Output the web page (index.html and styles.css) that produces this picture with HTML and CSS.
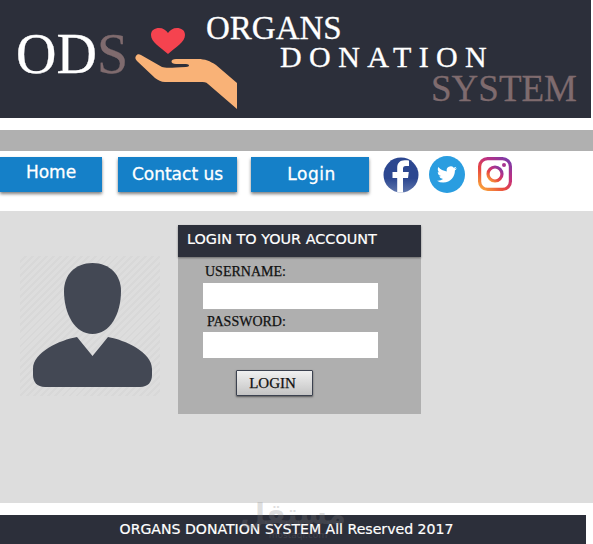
FILE: index.html
```html
<!DOCTYPE html>
<html lang="en">
<head>
    <meta charset="UTF-8">
    <meta name="viewport" content="width=device-width, initial-scale=1.0">
    <title>Organs Donation System</title>
    <link rel="stylesheet" href="styles.css">
</head>
<body>
    <header class="banner">
        <svg class="logo" width="591" height="118" viewBox="0 0 591 118">
            <text class="logo-text" x="16" y="73" font-size="56">OD<tspan class="logo-muted">S</tspan></text>
            <text class="logo-text" x="206" y="39" font-size="33">ORGANS</text>
            <text class="logo-text" x="280" y="67" font-size="30" letter-spacing="7.4">DONATION</text>
            <text class="logo-text logo-muted" x="431" y="101" font-size="37">SYSTEM</text>
            <path class="logo-heart" d="M168 54 C160 47 151 42 151 35 C151 30 155 28 159 28 C163 28 166 30 168 33 C170 30 173 28 177 28 C181 28 185 30 185 35 C185 42 176 47 168 54 Z"/>
            <path class="logo-hand" d="M136 56 C137 54 139 54 141 55 L162 67 C165 68 170 68 186 67 C190 67 190 64 186 64 L176 64 C170 64 170 59 176 59 L198 59 C205 59 210 61 216 65 L237 83 L237 109 L208 84 C206 82 204 82 200 82 L165 82 C161 82 158 80 155 78 L137 61 C135 59 135 57 136 56 Z"/>
        </svg>
    </header>

    <div class="band"></div>

    <nav class="nav">
        <a class="nav-btn nav-home" href="#">Home</a>
        <a class="nav-btn nav-contact" href="#">Contact us</a>
        <a class="nav-btn nav-login" href="#">Login</a>
        <div class="social">
            <svg width="36" height="36" viewBox="0 0 36 36">
                <defs>
                    <linearGradient id="fb" x1="0" y1="0" x2="0" y2="1">
                        <stop offset="0.6" stop-color="#2c4790"/>
                        <stop offset="1" stop-color="#5f76ad"/>
                    </linearGradient>
                    <clipPath id="fb-clip"><circle cx="18" cy="18" r="17.5"/></clipPath>
                </defs>
                <circle cx="18" cy="18" r="17.5" fill="url(#fb)"/>
                <path clip-path="url(#fb-clip)" fill="#fff" d="M20 36V21h5l.8-6H20v-3.2c0-1.7.6-2.8 2.9-2.8H26V3.6c-.6-.1-2.4-.3-4.4-.3-4.4 0-7.4 2.7-7.4 7.6V15H9.5v6h4.7v15z"/>
            </svg>
            <svg class="social-tw" width="36" height="37" viewBox="0 0 36 37">
                <ellipse cx="18" cy="18.5" rx="18" ry="18.5" fill="#2a9de0"/>
                <path transform="translate(8 8.5) scale(.83)" fill="#fff" d="M23.953 4.57a10 10 0 01-2.825.775 4.958 4.958 0 002.163-2.723c-.951.555-2.005.959-3.127 1.184a4.92 4.92 0 00-8.384 4.482C7.69 8.095 4.067 6.13 1.64 3.162a4.822 4.822 0 00-.666 2.475c0 1.71.87 3.213 2.188 4.096a4.904 4.904 0 01-2.228-.616v.06a4.923 4.923 0 003.946 4.827 4.996 4.996 0 01-2.212.085 4.936 4.936 0 004.604 3.417 9.867 9.867 0 01-6.102 2.105c-.39 0-.779-.023-1.17-.067a13.995 13.995 0 007.557 2.209c9.053 0 13.998-7.496 13.998-13.985 0-.21 0-.42-.015-.63A9.935 9.935 0 0024 4.59z"/>
            </svg>
            <svg class="social-ig" width="34" height="34" viewBox="0 0 34 34">
                <defs>
                    <linearGradient id="ig" x1="0.1" y1="1" x2="0.9" y2="0">
                        <stop offset="0" stop-color="#f9a13a"/>
                        <stop offset="0.35" stop-color="#e8483f"/>
                        <stop offset="0.65" stop-color="#c1307f"/>
                        <stop offset="1" stop-color="#7b3aa8"/>
                    </linearGradient>
                </defs>
                <g fill="none" stroke="url(#ig)" stroke-width="3.2">
                    <rect x="1.6" y="1.6" width="30.8" height="30.8" rx="8"/>
                    <circle cx="17" cy="17" r="7"/>
                </g>
                <circle cx="26" cy="8" r="2" fill="#a8348f"/>
            </svg>
        </div>
    </nav>

    <main class="content">
        <div class="avatar">
            <svg width="140" height="140" viewBox="0 0 140 140">
                <path fill="#434854" d="M72.5 7C90 7 101 19 101 35C101 58 90 78 72.5 78C55 78 44 58 44 35C44 19 55 7 72.5 7Z"/>
                <path fill="#434854" d="M57 81L72.5 100L88 81C105 84 132 96 132 113V119C132 126 128 131 120 131H25C17 131 13 126 13 119V113C13 96 40 84 57 81Z"/>
            </svg>
        </div>
        <section class="panel">
            <h2 class="panel-title">LOGIN TO YOUR ACCOUNT</h2>
            <form class="login-form">
                <label class="field-label" for="username">USERNAME:</label>
                <input class="field-input" id="username" type="text">
                <label class="field-label field-label-pass" for="password">PASSWORD:</label>
                <input class="field-input" id="password" type="password">
                <button class="login-btn" type="button">LOGIN</button>
            </form>
        </section>
    </main>

    <footer class="footer">ORGANS DONATION SYSTEM All Reserved 2017</footer>

    <div class="watermark" dir="rtl">مستقل<span class="watermark-url">mostaql.com</span></div>
</body>
</html>
```

FILE: styles.css
```css
body {
    margin: 0;
    background-color: #fff;
    font-family: "DejaVu Sans", sans-serif;
    height: 544px;
    overflow: hidden;
    position: relative;
}

.banner {
    background-color: #2c2f3a;
    width: 591px;
    height: 118px;
}
.logo {
    display: block;
}
.logo-text {
    font-family: "Liberation Serif", serif;
    fill: #fff;
    stroke: #fff;
    stroke-width: 0.3px;
}
.logo-muted {
    fill: #7f6b6e;
    stroke: #7f6b6e;
}
.logo-heart {
    fill: #f5434f;
}
.logo-hand {
    fill: #f9b277;
}

.band {
    background-color: #b0b0b0;
    height: 21px;
    margin-top: 12px;
}

.nav {
    display: flex;
    align-items: flex-start;
    margin-top: 6px;
    height: 54px;
}
.nav-btn {
    display: block;
    height: 35px;
    line-height: 35px;
    background-color: #1580c8;
    box-shadow: 0 2px 3px rgba(0, 0, 0, 0.5);
    color: #fff;
    font-size: 17px;
    text-align: center;
    text-decoration: none;
    -webkit-text-stroke: 0.3px #fff;
}
.nav-home {
    width: 102px;
    line-height: 31px;
}
.nav-contact {
    width: 119px;
    margin-left: 16px;
}
.nav-login {
    width: 118px;
    margin-left: 14px;
    letter-spacing: 0.5px;
    text-indent: 3px;
}
.social {
    display: flex;
    align-items: flex-start;
    margin-left: 14px;
}
.social-tw {
    margin-left: 10px;
    margin-top: -1px;
}
.social-ig {
    margin-left: 13px;
}

.content {
    display: flex;
    align-items: flex-start;
    background-color: #dddddd;
    height: 292px;
}
.avatar {
    width: 140px;
    height: 140px;
    margin-left: 20px;
    margin-top: 45px;
    background-image: repeating-linear-gradient(135deg, #dddddd 0, #dddddd 3px, #d8d8d8 3px, #d8d8d8 5px);
}
.avatar svg {
    display: block;
}

.panel {
    width: 243px;
    height: 189px;
    margin-left: 18px;
    margin-top: 14px;
    background-color: #afafaf;
}
.panel-title {
    margin: 0;
    height: 32px;
    line-height: 28px;
    padding-left: 9px;
    background-color: #2c2f3a;
    box-shadow: 0 1px 2px rgba(0, 0, 0, 0.4);
    color: #fff;
    font-size: 14.4px;
    font-weight: normal;
    -webkit-text-stroke: 0.2px #fff;
}

.login-form {
    display: flex;
    flex-direction: column;
    align-items: flex-start;
    padding-left: 25px;
}
.field-label {
    font-family: "Liberation Serif", serif;
    font-size: 14px;
    line-height: 16px;
    color: #111;
    margin-left: 2px;
    margin-top: 7px;
    margin-bottom: 3px;
    -webkit-text-stroke: 0.25px #111;
}
.field-label-pass {
    margin-left: 4px;
    margin-top: 5px;
    margin-bottom: 2px;
}
.field-input {
    width: 175px;
    height: 26px;
    box-sizing: border-box;
    border: none;
    background-color: #fff;
    padding: 0;
}
.login-btn {
    width: 77px;
    height: 26px;
    margin-top: 12px;
    margin-left: 33px;
    padding: 0 4px 0 0;
    border: 1px solid #3c4250;
    border-radius: 1px;
    background-image: linear-gradient(#f0f0f0, #c4c4c4);
    box-shadow: 0 1px 2px rgba(0, 0, 0, 0.5);
    font-family: "Liberation Serif", serif;
    font-size: 15px;
    color: #111;
    -webkit-text-stroke: 0.25px #111;
}

.footer {
    margin-top: 12px;
    width: 573px;
    padding-right: 13px;
    height: 29px;
    line-height: 29px;
    background-color: #2c2f3a;
    color: #fff;
    font-size: 14.1px;
    text-align: center;
    -webkit-text-stroke: 0.2px #fff;
}

.watermark {
    position: absolute;
    left: 250px;
    top: 498px;
    width: 96px;
    text-align: center;
    font-size: 29px;
    line-height: 32px;
    font-weight: bold;
    color: rgba(130, 130, 130, 0.25);
}
.watermark-url {
    display: block;
    font-size: 9px;
    line-height: 10px;
    font-weight: normal;
}
```
